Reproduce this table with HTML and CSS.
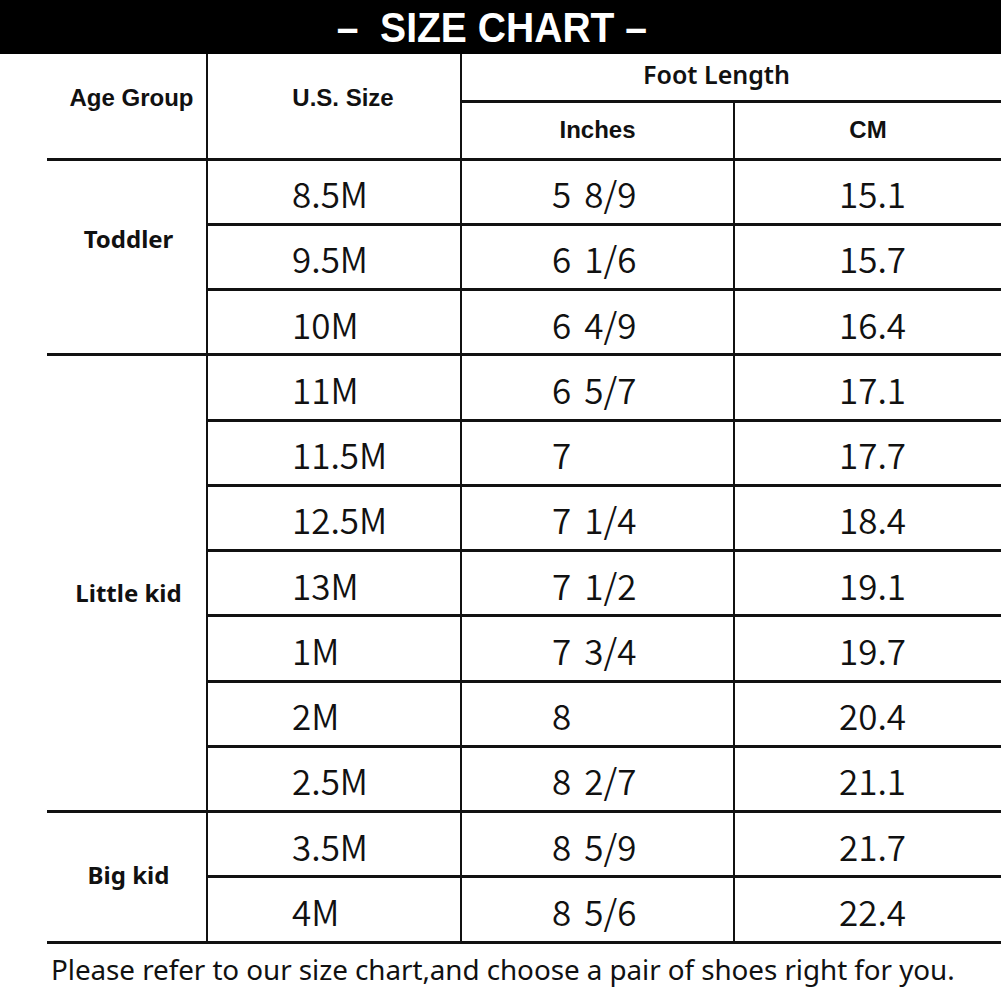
FILE: index.html
```html
<!DOCTYPE html>
<html>
<head>
<meta charset="utf-8">
<link rel="stylesheet" href="styles.css">
</head>
<body>
<div class="banner"><span class="banner-text">–&nbsp; SIZE CHART –</span></div>
<table class="chart">
  <colgroup>
    <col class="c-age"><col class="c-size"><col class="c-in"><col class="c-cm">
  </colgroup>
  <thead>
    <tr class="h1">
      <th rowspan="2" class="age-h"><span class="lift">Age Group</span></th>
      <th rowspan="2" class="size-h"><span class="lift">U.S. Size</span></th>
      <th colspan="2" class="foot-h">Foot Length</th>
    </tr>
    <tr class="h2">
      <th class="sub-h">Inches</th>
      <th class="sub-h">CM</th>
    </tr>
  </thead>
  <tbody>
    <tr><td rowspan="3" class="grp"><span class="toddler">Toddler</span></td><td class="sz">8.5M</td><td class="in"><span class="w">5</span>8/9</td><td class="cm">15.1</td></tr>
    <tr><td class="sz">9.5M</td><td class="in"><span class="w">6</span>1/6</td><td class="cm">15.7</td></tr>
    <tr><td class="sz">10M</td><td class="in"><span class="w">6</span>4/9</td><td class="cm">16.4</td></tr>
    <tr><td rowspan="7" class="grp"><span class="little">Little kid</span></td><td class="sz">11M</td><td class="in"><span class="w">6</span>5/7</td><td class="cm">17.1</td></tr>
    <tr><td class="sz">11.5M</td><td class="in">7</td><td class="cm">17.7</td></tr>
    <tr><td class="sz">12.5M</td><td class="in"><span class="w">7</span>1/4</td><td class="cm">18.4</td></tr>
    <tr><td class="sz">13M</td><td class="in"><span class="w">7</span>1/2</td><td class="cm">19.1</td></tr>
    <tr><td class="sz">1M</td><td class="in"><span class="w">7</span>3/4</td><td class="cm">19.7</td></tr>
    <tr><td class="sz">2M</td><td class="in">8</td><td class="cm">20.4</td></tr>
    <tr><td class="sz">2.5M</td><td class="in"><span class="w">8</span>2/7</td><td class="cm">21.1</td></tr>
    <tr><td rowspan="2" class="grp"><span class="big">Big kid</span></td><td class="sz">3.5M</td><td class="in"><span class="w">8</span>5/9</td><td class="cm">21.7</td></tr>
    <tr><td class="sz">4M</td><td class="in"><span class="w">8</span>5/6</td><td class="cm">22.4</td></tr>
  </tbody>
</table>
<p class="note">Please refer to our size chart,and choose a pair of shoes right for you.</p>
</body>
</html>
```

FILE: styles.css
```css
html, body {
  margin: 0;
  padding: 0;
  background: #fff;
}
body {
  width: 1001px;
  color: #111;
  font-family: "Noto Sans", "Liberation Sans", sans-serif;
}
.banner {
  height: 54px;
  background: #000;
  display: flex;
  justify-content: center;
  align-items: center;
  padding-right: 18px;
  box-sizing: border-box;
}
.banner-text {
  display: inline-block;
  color: #fff;
  font-family: "Liberation Sans", Arial, sans-serif;
  font-weight: 700;
  font-size: 42px;
  line-height: 54px;
  transform: scaleX(0.93);
  white-space: nowrap;
  position: relative;
  top: 1px;
}
.chart {
  margin-left: 47px;
  width: 954px;
  border-collapse: collapse;
  table-layout: fixed;
}
.c-age { width: 160px; }
.c-size { width: 254px; }
.c-in { width: 273px; }
.c-cm { width: 267px; }
.chart th, .chart td {
  padding: 0;
  border: 0 solid #111;
  border-bottom-width: 3px;
}
.chart td.sz, .chart td.in, .chart td.cm,
.chart th.size-h, .chart th.foot-h, .chart th.sub-h {
  border-left-width: 2px;
}
.h1 { height: 47px; }
.h2 { height: 58px; }
.chart th {
  font-family: "Liberation Sans", Arial, sans-serif;
  font-weight: 700;
  font-size: 24px;
  text-align: center;
  vertical-align: middle;
}
.age-h { padding-left: 10px !important; }
.size-h { padding-left: 18px !important; }
.age-h .lift, .size-h .lift {
  position: relative;
  top: -8px;
}
.chart th.foot-h {
  font-family: "Noto Sans", sans-serif;
  font-weight: 600;
  font-size: 25px;
  padding: 0 30px 6px 0;
}
.chart tbody tr { height: 65.25px; }
.chart td {
  font-family: "Noto Sans CJK JP", "Noto Sans", sans-serif;
  font-weight: 350;
  font-size: 35px;
  vertical-align: middle;
  text-align: left;
  padding-top: 2px;
}
.chart td.sz { padding-left: 84px; }
.chart td.in { padding-left: 90px; }
.chart td.cm { padding-left: 104px; }
.w { margin-right: 13px; }
.chart td.grp {
  text-align: center;
  font-family: "Noto Sans", sans-serif;
  font-weight: 700;
  font-size: 24px;
  padding: 0 0 0 4px;
}
.toddler {
  position: relative;
  top: -18px;
}
.little {
  position: relative;
  top: 9px;
}
.big {
  position: relative;
  top: -2px;
}
.note {
  margin: 0;
  padding: 6px 0 0 51px;
  font-family: "Noto Sans", sans-serif;
  font-size: 27.8px;
  letter-spacing: -0.05px;
  line-height: 38px;
  color: #111;
  white-space: nowrap;
}
```
